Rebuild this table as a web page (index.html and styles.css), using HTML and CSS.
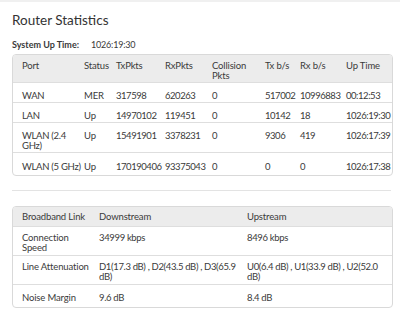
FILE: index.html
```html
<!DOCTYPE html>
<html>
<head>
<meta charset="utf-8">
<link rel="stylesheet" href="styles.css">
</head>
<body>
<div class="topbar"></div>
<main class="page">
  <h1 class="title">Router Statistics</h1>
  <div class="uptime"><span class="uptime-label">System Up Time:</span><span class="uptime-value">1026:19:30</span></div>

  <table class="grid ports">
    <colgroup>
      <col class="c1"><col class="c2"><col class="c3"><col class="c4"><col class="c5"><col class="c6"><col class="c7"><col class="c8">
    </colgroup>
    <thead>
      <tr><th>Port</th><th>Status</th><th>TxPkts</th><th>RxPkts</th><th>Collision Pkts</th><th>Tx b/s</th><th>Rx b/s</th><th>Up Time</th></tr>
    </thead>
    <tbody>
      <tr><td>WAN</td><td>MER</td><td>317598</td><td>620263</td><td>0</td><td>517002</td><td>10996883</td><td>00:12:53</td></tr>
      <tr><td>LAN</td><td>Up</td><td>14970102</td><td>119451</td><td>0</td><td>10142</td><td>18</td><td>1026:19:30</td></tr>
      <tr><td>WLAN (2.4 GHz)</td><td>Up</td><td>15491901</td><td>3378231</td><td>0</td><td>9306</td><td>419</td><td>1026:17:39</td></tr>
      <tr class="last"><td class="nowrap">WLAN (5 GHz)</td><td>Up</td><td>170190406</td><td>93375043</td><td>0</td><td>0</td><td>0</td><td>1026:17:38</td></tr>
    </tbody>
  </table>

  <hr class="rule">

  <table class="grid link">
    <colgroup>
      <col class="l1"><col class="l2"><col class="l3">
    </colgroup>
    <thead>
      <tr><th>Broadband Link</th><th>Downstream</th><th>Upstream</th></tr>
    </thead>
    <tbody>
      <tr><td>Connection Speed</td><td>34999 kbps</td><td>8496 kbps</td></tr>
      <tr><td>Line Attenuation</td><td>D1(17.3 dB) , D2(43.5 dB) , D3(65.9 dB)</td><td>U0(6.4 dB) , U1(33.9 dB) , U2(52.0 dB)</td></tr>
      <tr class="last"><td>Noise Margin</td><td>9.6 dB</td><td>8.4 dB</td></tr>
    </tbody>
  </table>
</main>
</body>
</html>
```

FILE: styles.css
```css
html, body {
  margin: 0;
  padding: 0;
  background: #ffffff;
}
body {
  font-family: "Lato", "Open Sans", sans-serif;
  color: #3a3a3a;
}
.topbar {
  height: 2px;
  background: #f0f0f0;
}
.page {
  padding: 0 9px 0 12px;
}
.title {
  margin: 0;
  padding-top: 9px;
  font-size: 13.5px;
  line-height: 18px;
  font-weight: 400;
  color: #333333;
}
.uptime {
  margin-top: 10px;
  font-size: 9px;
  line-height: 11px;
  display: flex;
}
.uptime-label {
  font-weight: 700;
  width: 79px;
}
.uptime-value {
  letter-spacing: -0.2px;
}
.grid {
  width: 100%;
  table-layout: fixed;
  border-collapse: separate;
  border-spacing: 0;
  border: 1px solid #d9d9d9;
  border-radius: 4px;
  font-size: 9.5px;
  line-height: 10px;
  color: #3a3a3a;
}
.grid th, .grid td {
  text-align: left;
  font-weight: 400;
  vertical-align: top;
  padding: 8px 2px 1px 4px;
  letter-spacing: -0.15px;
}
.grid td {
  border-top: 1px solid #dedede;
}
.grid th {
  background: #ececec;
}
.grid th:first-child, .grid td:first-child {
  padding-left: 9px;
}
.grid thead tr:first-child th:first-child { border-top-left-radius: 3px; }
.grid thead tr:first-child th:last-child { border-top-right-radius: 3px; }
.ports {
  margin-top: 4px;
}
.ports th {
  padding-top: 6px;
  padding-bottom: 1px;
}
.ports td:first-child {
  letter-spacing: -0.3px;
}
.ports td:nth-child(n+3) {
  letter-spacing: -0.45px;
}
.ports tr.last td {
  padding-top: 9px;
  padding-bottom: 3px;
}
.nowrap { white-space: nowrap; }
.c1 { width: 67px; }
.c2 { width: 32px; }
.c3 { width: 49px; }
.c4 { width: 47px; }
.c5 { width: 53px; }
.c6 { width: 35px; }
.c7 { width: 46px; }
.c8 { width: 50px; }
.rule {
  margin: 14px 0 0 0;
  border: 0;
  border-top: 1px solid #e3e3e3;
  height: 0;
}
.link {
  margin-top: 15px;
}
.link th {
  padding-top: 5px;
  padding-bottom: 4px;
}
.link td {
  padding-top: 6px;
  padding-bottom: 2px;
}
.link td:nth-child(n+2) {
  letter-spacing: -0.35px;
}
.link tr.last td {
  padding-top: 8px;
  padding-bottom: 4px;
}
.l1 { width: 82px; }
.l2 { width: 148px; }
.l3 { width: 149px; }
```
